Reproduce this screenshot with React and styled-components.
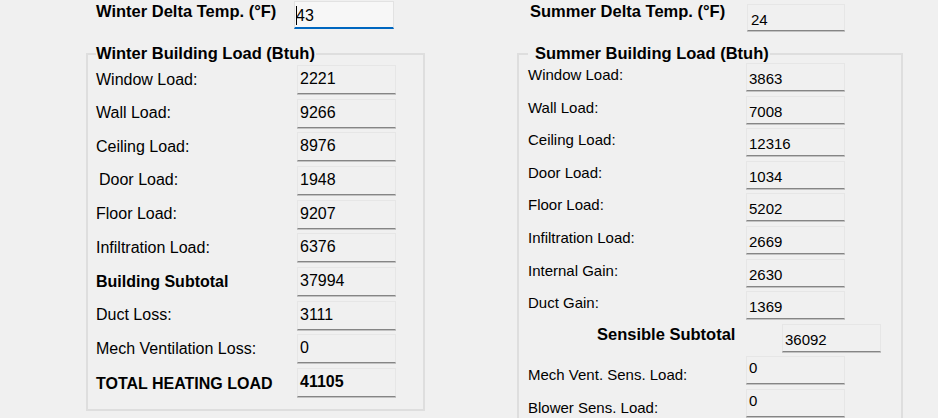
import styled, { createGlobalStyle } from "styled-components";

const GlobalStyle = createGlobalStyle`
  html, body {
    margin: 0;
    padding: 0;
    background: #f0f0f0;
    font-family: "Liberation Sans", Arial, sans-serif;
    color: #000;
  }
`;

const Page = styled.div`
  width: 938px;
  height: 418px;
  overflow: hidden;
  padding-left: 86px;
  box-sizing: border-box;
  display: grid;
  grid-template-columns: 339px 386px;
  column-gap: 92px;
  align-items: start;
`;

const Column = styled.div`
  display: flex;
  flex-direction: column;
`;

const Header = styled.div`
  height: 44px;
  display: flex;
  align-items: flex-start;
  padding-left: ${(p) => p.$indent}px;
`;

const HeaderLabel = styled.div`
  font-size: 16.5px;
  font-weight: bold;
  line-height: 19px;
  margin-top: 2px;
  width: ${(p) => p.$width}px;
`;

const Group = styled.fieldset`
  margin: 0;
  border: 2px solid #dedede;
  padding: ${(p) => p.$padTop}px 0 ${(p) => p.$padBottom}px ${(p) => p.$padLeft}px;
  min-width: 0;
`;

const Legend = styled.legend`
  font-size: 16.5px;
  font-weight: bold;
  line-height: 19px;
  padding: 0 1px 0 ${(p) => p.$pad}px;
  margin-left: ${(p) => p.$shift}px;
`;

const Rows = styled.div`
  display: grid;
  row-gap: ${(p) => p.$gap}px;
`;

const Row = styled.div`
  display: grid;
  grid-template-columns: ${(p) => p.$labelWidth}px ${(p) => p.$boxWidth}px;
  align-items: center;
  height: ${(p) => p.$height}px;
`;

const Label = styled.div`
  font-size: ${(p) => p.$size}px;
  font-weight: ${(p) => (p.$bold ? "bold" : "normal")};
  line-height: 18px;
  padding-left: ${(p) => p.$indent || 0}px;
  padding-top: ${(p) => (p.$dy > 0 ? 2 * p.$dy : 0)}px;
  padding-bottom: ${(p) => (p.$dy < 0 ? -2 * p.$dy : 0)}px;
  white-space: nowrap;
`;

const Box = styled.div`
  box-sizing: border-box;
  width: ${(p) => p.$width}px;
  height: ${(p) => p.$height}px;
  margin-top: ${(p) => p.$top || 0}px;
  background: ${(p) => (p.$focused ? "#f7f7f7" : "#f0f0f0")};
  border: 1px solid ${(p) => (p.$focused ? "#e2e2e2" : "#e6e6e6")};
  border-bottom: ${(p) => (p.$focused ? "2px solid #0067c0" : "1px solid #858585")};
  box-shadow: ${(p) => (p.$focused ? "none" : "0 1px 0 #c2c2c2")};
  padding: ${(p) => p.$padTop}px 0 0 ${(p) => p.$padLeft}px;
  font-size: ${(p) => p.$size}px;
  font-weight: ${(p) => (p.$bold ? "bold" : "normal")};
  line-height: 18px;
  color: #000;
`;

const Caret = styled.span`
  display: inline-block;
  width: 1px;
  height: 19px;
  background: #000;
  margin-right: -1px;
  vertical-align: -4px;
`;

const winterRows = [
  { label: "Window Load:", value: "2221" },
  { label: "Wall Load:", value: "9266" },
  { label: "Ceiling Load:", value: "8976" },
  { label: "Door Load:", value: "1948", indent: 3 },
  { label: "Floor Load:", value: "9207" },
  { label: "Infiltration Load:", value: "6376" },
  { label: "Building Subtotal", value: "37994", bold: true, dy: 1 },
  { label: "Duct Loss:", value: "3111" },
  { label: "Mech Ventilation Loss:", value: "0" },
  { label: "TOTAL HEATING LOAD", value: "41105", bold: true, boldValue: true, dy: 2 },
];

const summerRows = [
  { label: "Window Load:", value: "3863" },
  { label: "Wall Load:", value: "7008" },
  { label: "Ceiling Load:", value: "12316" },
  { label: "Door Load:", value: "1034" },
  { label: "Floor Load:", value: "5202" },
  { label: "Infiltration Load:", value: "2669" },
  { label: "Internal Gain:", value: "2630" },
  { label: "Duct Gain:", value: "1369" },
];

const summerExtra = [
  { label: "Mech Vent. Sens. Load:", value: "0" },
  { label: "Blower Sens. Load:", value: "0" },
];

const App = () => {
  return (
    <>
      <GlobalStyle />
      <Page>
        <Column>
          <Header $indent={10}>
            <HeaderLabel $width={198}>Winter Delta Temp. (°F)</HeaderLabel>
            <Box $width={100} $height={28} $top={1} $focused $size={16} $padTop={4} $padLeft={1}>
              <Caret />
              43
            </Box>
          </Header>
          <Group $padTop={2} $padBottom={12} $padLeft={8}>
            <Legend $pad={0} $shift={0}>Winter Building Load (Btuh)</Legend>
            <Rows $gap={4.67}>
              {winterRows.map((r) => (
                <Row key={r.label} $labelWidth={201} $boxWidth={99} $height={29}>
                  <Label $size={16} $bold={r.bold} $indent={r.indent} $dy={r.dy || 0}>
                    {r.label}
                  </Label>
                  <Box $width={99} $height={29} $size={16} $bold={r.boldValue} $padTop={4} $padLeft={2}>
                    {r.value}
                  </Box>
                </Row>
              ))}
            </Rows>
          </Group>
        </Column>

        <Column>
          <Header $indent={13}>
            <HeaderLabel $width={217}>Summer Delta Temp. (°F)</HeaderLabel>
            <Box $width={98} $height={27} $top={4} $size={15} $padTop={6} $padLeft={3}>
              24
            </Box>
          </Header>
          <Group $padTop={0} $padBottom={20} $padLeft={9}>
            <Legend $pad={7} $shift={0}>Summer Building Load (Btuh)</Legend>
            <Rows $gap={4.6}>
              {summerRows.map((r) => (
                <Row key={r.label} $labelWidth={218} $boxWidth={99} $height={28}>
                  <Label $size={15} $dy={-2}>
                    {r.label}
                  </Label>
                  <Box $width={99} $height={28} $size={15} $padTop={6} $padLeft={2}>
                    {r.value}
                  </Box>
                </Row>
              ))}
              <Row $labelWidth={254} $boxWidth={99} $height={28}>
                <Label $size={16.5} $bold $indent={69} $dy={-4}>
                  Sensible Subtotal
                </Label>
                <Box $width={99} $height={28} $size={15} $padTop={6} $padLeft={2}>
                  36092
                </Box>
              </Row>
              {summerExtra.map((r) => (
                <Row key={r.label} $labelWidth={218} $boxWidth={99} $height={28}>
                  <Label $size={15} $dy={5}>
                    {r.label}
                  </Label>
                  <Box $width={99} $height={28} $size={15} $padTop={2} $padLeft={2}>
                    {r.value}
                  </Box>
                </Row>
              ))}
            </Rows>
          </Group>
        </Column>
      </Page>
    </>
  );
};

export default App;
